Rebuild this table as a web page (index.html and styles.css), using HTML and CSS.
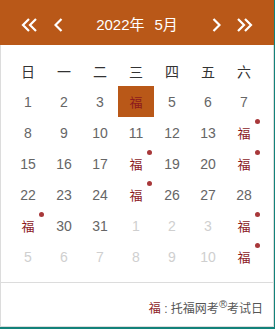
FILE: index.html
```html
<!DOCTYPE html>
<html lang="zh">
<head>
<meta charset="utf-8">
<link rel="stylesheet" href="styles.css">
</head>
<body>
<div class="cal">
  <div class="head">
    <span class="btn btn-wide"><svg width="16" height="14" viewBox="0 0 16 14"><path d="M8 1 L2 7 L8 13 M15 1 L9 7 L15 13" fill="none" stroke="#fff" stroke-width="2.2"/></svg></span>
    <span class="btn"><svg width="9" height="14" viewBox="0 0 9 14"><path d="M7.5 1 L1.5 7 L7.5 13" fill="none" stroke="#fff" stroke-width="2.2"/></svg></span>
    <span class="title">2022年<span class="month">5月</span></span>
    <span class="btn"><svg width="9" height="14" viewBox="0 0 9 14"><path d="M1.5 1 L7.5 7 L1.5 13" fill="none" stroke="#fff" stroke-width="2.2"/></svg></span>
    <span class="btn btn-wide"><svg width="16" height="14" viewBox="0 0 16 14"><path d="M1 1 L7 7 L1 13 M8 1 L14 7 L8 13" fill="none" stroke="#fff" stroke-width="2.2"/></svg></span>
  </div>
  <div class="grid">
    <div class="wd">日</div><div class="wd">一</div><div class="wd">二</div><div class="wd">三</div><div class="wd">四</div><div class="wd">五</div><div class="wd">六</div>

    <div class="d">1</div><div class="d">2</div><div class="d">3</div><div class="d fu sel">福</div><div class="d">5</div><div class="d">6</div><div class="d">7</div>

    <div class="d">8</div><div class="d">9</div><div class="d">10</div><div class="d">11</div><div class="d">12</div><div class="d">13</div><div class="d fu">福<i class="dot"></i></div>

    <div class="d">15</div><div class="d">16</div><div class="d">17</div><div class="d fu">福<i class="dot"></i></div><div class="d">19</div><div class="d">20</div><div class="d fu">福<i class="dot"></i></div>

    <div class="d">22</div><div class="d">23</div><div class="d">24</div><div class="d fu">福<i class="dot"></i></div><div class="d">26</div><div class="d">27</div><div class="d">28</div>

    <div class="d fu">福<i class="dot"></i></div><div class="d">30</div><div class="d">31</div><div class="d out">1</div><div class="d out">2</div><div class="d out">3</div><div class="d fu">福<i class="dot"></i></div>

    <div class="d out">5</div><div class="d out">6</div><div class="d out">7</div><div class="d out">8</div><div class="d out">9</div><div class="d out">10</div><div class="d fu">福<i class="dot"></i></div>
  </div>
  <div class="foot"><span class="fu">福</span> : 托福网考<sup>®</sup>考试日</div>
</div>
</body>
</html>
```
FILE: styles.css
```css
html, body {
  margin: 0;
  padding: 0;
}
body {
  background: #12827a;
  font-family: "Liberation Sans", "Noto Sans CJK SC", sans-serif;
}
.cal {
  box-sizing: border-box;
  width: 274px;
  height: 327px;
  background: #fff;
  border: 1px solid #dcdcdc;
  border-top: none;
  display: flex;
  flex-direction: column;
}
.head {
  margin: 0 -1px;
  height: 45px;
  box-sizing: border-box;
  padding: 5px 13px 0 13px;
  background: #b95818;
  color: #fff;
  display: flex;
  align-items: center;
}
.btn {
  width: 26px;
  display: flex;
  justify-content: center;
  align-items: center;
}
.btn-wide {
  width: 32px;
}
.title {
  flex: 1;
  text-align: center;
  font-size: 15px;
  line-height: 20px;
}
.month {
  margin-left: 10px;
}
.grid {
  padding: 10px 11px 10px 9px;
  display: grid;
  grid-template-columns: repeat(7, 36px);
  grid-auto-rows: 31px;
  border-bottom: 1px solid #dcdcdc;
}
.wd {
  display: flex;
  justify-content: center;
  align-items: center;
  font-size: 14px;
  color: #333;
}
.d {
  position: relative;
  display: flex;
  justify-content: center;
  align-items: center;
  font-size: 14px;
  color: #666;
}
.d.out {
  color: #cfcfcf;
}
.fu {
  color: #8c1a1e;
}
.d.fu {
  font-size: 13px;
}
.sel {
  background: #b95818;
}
.dot {
  position: absolute;
  top: 2px;
  right: 2px;
  width: 5px;
  height: 5px;
  border-radius: 50%;
  background: #a8383a;
}
.foot {
  flex: 1;
  box-sizing: border-box;
  padding: 17px 10px 0 0;
  text-align: right;
  font-size: 12px;
  line-height: 18px;
  color: #555;
}
.foot sup {
  font-size: 11px;
  line-height: 0;
}
```
